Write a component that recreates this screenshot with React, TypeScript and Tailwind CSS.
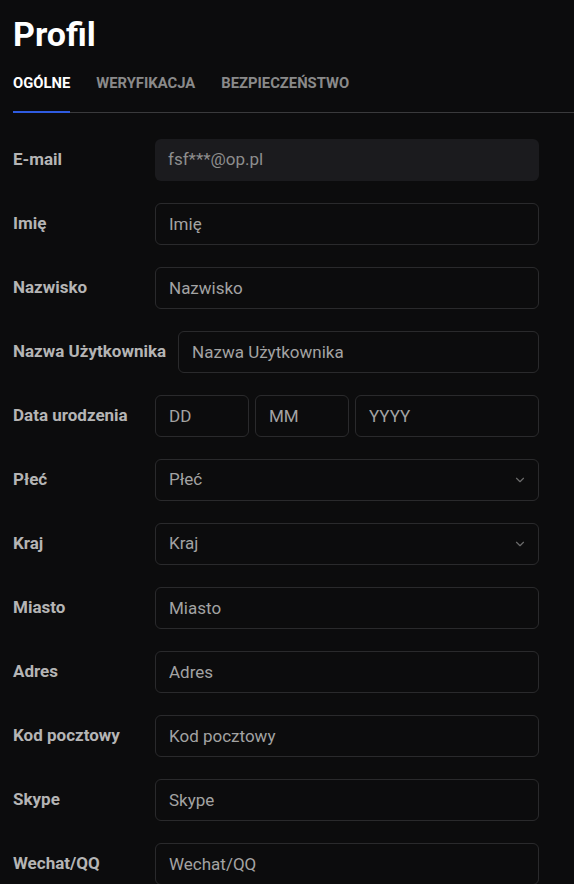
import React from 'react';
import { ChevronDown } from 'lucide-react';

const labelCls = 'min-w-[130px] text-[17px] font-bold text-[#b5b5b5] whitespace-nowrap';
const inputCls =
  'h-[42px] w-full rounded-md border border-[#2a2a2c] bg-transparent px-[13px] text-[17px] text-[#a3a3a3] placeholder-[#a3a3a3] outline-none';

const Row: React.FC<{ label: string; children: React.ReactNode }> = ({ label, children }) => (
  <div className="flex items-center gap-3 h-[64px]">
    <div className={labelCls}>{label}</div>
    <div className="flex-1 flex gap-[6px]">{children}</div>
  </div>
);

const Select: React.FC<{ text: string }> = ({ text }) => (
  <div className={`${inputCls} flex items-center justify-between pr-[11px]`}>
    <span>{text}</span>
    <ChevronDown size={14} className="text-[#6b6b6b]" />
  </div>
);

export default function App() {
  const fields = ['Miasto', 'Adres', 'Kod pocztowy', 'Skype', 'Wechat/QQ'];
  return (
    <div className="bg-[#0c0c0d] font-['Roboto',sans-serif] pl-[13px] overflow-hidden h-[884px]">
      <h1 className="text-[34px] font-bold text-white pt-[12px] leading-[44px]">Profil</h1>
      <div className="flex gap-[26px] mt-[16px] border-b border-[#3a3a3c]">
        <div className="pb-[17px] text-[14.8px] font-bold text-white border-b-2 border-[#2f5be0] -mb-px">OGÓLNE</div>
        <div className="pb-[17px] text-[14.8px] font-bold text-[#8a8a8a]">WERYFIKACJA</div>
        <div className="pb-[17px] text-[14.8px] font-bold text-[#8a8a8a]">BEZPIECZEŃSTWO</div>
      </div>
      <div className="pr-[35px] mt-[15px]">
        <Row label="E-mail">
          <div className="h-[42px] w-full rounded-md bg-[#1b1b1e] px-[13px] flex items-center text-[17px] text-[#8e8e8e]">fsf***@op.pl</div>
        </Row>
        <Row label="Imię"><input className={inputCls} placeholder="Imię" /></Row>
        <Row label="Nazwisko"><input className={inputCls} placeholder="Nazwisko" /></Row>
        <Row label="Nazwa Użytkownika"><input className={inputCls} placeholder="Nazwa Użytkownika" /></Row>
        <Row label="Data urodzenia">
          <input className={`${inputCls} !w-[94px] shrink-0`} placeholder="DD" />
          <input className={`${inputCls} !w-[94px] shrink-0`} placeholder="MM" />
          <input className={`${inputCls} flex-1 min-w-0`} placeholder="YYYY" />
        </Row>
        <Row label="Płeć"><Select text="Płeć" /></Row>
        <Row label="Kraj"><Select text="Kraj" /></Row>
        {fields.map(f => (
          <Row key={f} label={f}><input className={inputCls} placeholder={f} /></Row>
        ))}
      </div>
    </div>
  );
}
